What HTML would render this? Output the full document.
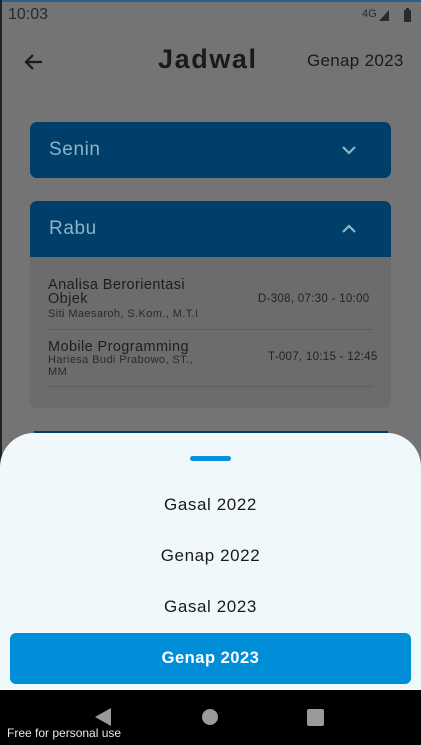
<!DOCTYPE html>
<html><head><meta charset="utf-8"><style>
*{margin:0;padding:0;box-sizing:border-box}
body{width:421px;height:745px;overflow:hidden;background:#747474;font-family:"Liberation Sans",sans-serif;position:relative;color:#1a1a1a}
.abs{position:absolute}
.hdr{position:absolute;left:30px;width:361px;height:56px;background:#003f69;border-radius:7px;color:#8fb4c8;font-size:19px;letter-spacing:0.6px;padding:0 0 0 19px;line-height:56px}
.card{position:absolute;left:30px;top:201px;width:361px;height:207px;background:#6c6c6c;border-radius:7px;overflow:hidden}
.line{position:absolute;left:48px;width:325px;height:1px;background:#5e5e5e}
.opt{position:absolute;left:0;width:421px;text-align:center;font-size:17px;letter-spacing:0.6px}
</style></head><body>
<div class="abs" style="left:0;top:0;width:421px;height:2px;background:#2a5f8a"></div>
<div class="abs" style="left:0;top:0;width:2px;height:700px;background:#222"></div>
<div class="abs" style="left:8px;top:6px;font-size:16px;color:#2a2a2a">10:03</div>
<div class="abs" style="left:362px;top:8px;font-size:11px;color:#2a2a2a">4G</div>
<svg class="abs" style="left:377px;top:7px" width="36" height="16"><polygon points="2,14 12,3 12,14" fill="#2a2a2a"/><rect x="27" y="3" width="7" height="12" fill="#2a2a2a"/><rect x="29" y="1" width="3" height="2" fill="#2a2a2a"/></svg>
<svg class="abs" style="left:22px;top:50px" width="24" height="24"><path d="M20 12H5M11 5l-7 7 7 7" stroke="#1a1a1a" stroke-width="2.2" fill="none"/></svg>
<div class="abs" style="left:158px;top:44px;font-size:27px;font-weight:bold;letter-spacing:1.6px;color:#1a1a1a">Jadwal</div>
<div class="abs" style="left:307px;top:51px;font-size:17px;letter-spacing:0.3px;color:#1a1a1a">Genap 2023</div>
<div class="hdr" style="top:122px">Senin</div>
<svg class="abs" style="left:340px;top:142px" width="18" height="16"><path d="M3 5l6 6 6-6" stroke="#8fb4c8" stroke-width="2.2" fill="none"/></svg>
<div class="card"></div>
<div class="hdr" style="top:201px;border-radius:7px 7px 0 0">Rabu</div>
<svg class="abs" style="left:340px;top:221px" width="18" height="16"><path d="M3 11l6-6 6 6" stroke="#8fb4c8" stroke-width="2.2" fill="none"/></svg>
<div class="abs" style="left:48px;top:278px;font-size:14.5px;line-height:14px;letter-spacing:0.4px;color:#1e1e1e">Analisa Berorientasi<br>Objek</div>
<div class="abs" style="left:48px;top:308px;font-size:11px;letter-spacing:0.4px;color:#2a2a2a">Siti Maesaroh, S.Kom., M.T.I</div>
<div class="abs" style="left:258px;top:293px;font-size:11.5px;letter-spacing:0.3px;color:#222">D-308, 07:30 - 10:00</div>
<div class="line" style="top:329px"></div>
<div class="abs" style="left:48px;top:339px;font-size:14.5px;letter-spacing:0.4px;color:#1e1e1e">Mobile Programming</div>
<div class="abs" style="left:48px;top:354px;font-size:11px;line-height:12px;letter-spacing:0.4px;color:#2a2a2a">Hariesa Budi Prabowo, ST.,<br>MM</div>
<div class="abs" style="left:268px;top:351px;font-size:11.5px;letter-spacing:0.3px;color:#222">T-007, 10:15 - 12:45</div>
<div class="line" style="top:386px"></div>
<div class="abs" style="left:34px;top:431px;width:354px;height:4px;background:#003f69"></div>
<div class="abs" style="left:0;top:433px;width:421px;height:260px;background:#f0f8fc;border-radius:34px 34px 0 0"></div>
<div class="abs" style="left:190px;top:456px;width:41px;height:5px;border-radius:3px;background:#0a8ee0"></div>
<div class="opt" style="top:495px">Gasal 2022</div>
<div class="opt" style="top:546px">Genap 2022</div>
<div class="opt" style="top:597px">Gasal 2023</div>
<div class="abs" style="left:10px;top:633px;width:401px;height:51px;background:#008ed9;border-radius:6px;color:#fff;font-weight:bold;font-size:16.5px;letter-spacing:0.5px;text-align:center;line-height:51px">Genap 2023</div>
<div class="abs" style="left:0;top:690px;width:421px;height:55px;background:#000"></div>
<svg class="abs" style="left:90px;top:705px" width="240" height="24"><polygon points="5,12 21,3 21,21" fill="#9a9a9a"/><circle cx="120" cy="12" r="8" fill="#9a9a9a"/><rect x="217" y="4" width="17" height="17" rx="2" fill="#9a9a9a"/></svg>
<div class="abs" style="left:7px;top:726px;font-size:12px;color:#e8e8e8">Free for personal use</div>
</body></html>
